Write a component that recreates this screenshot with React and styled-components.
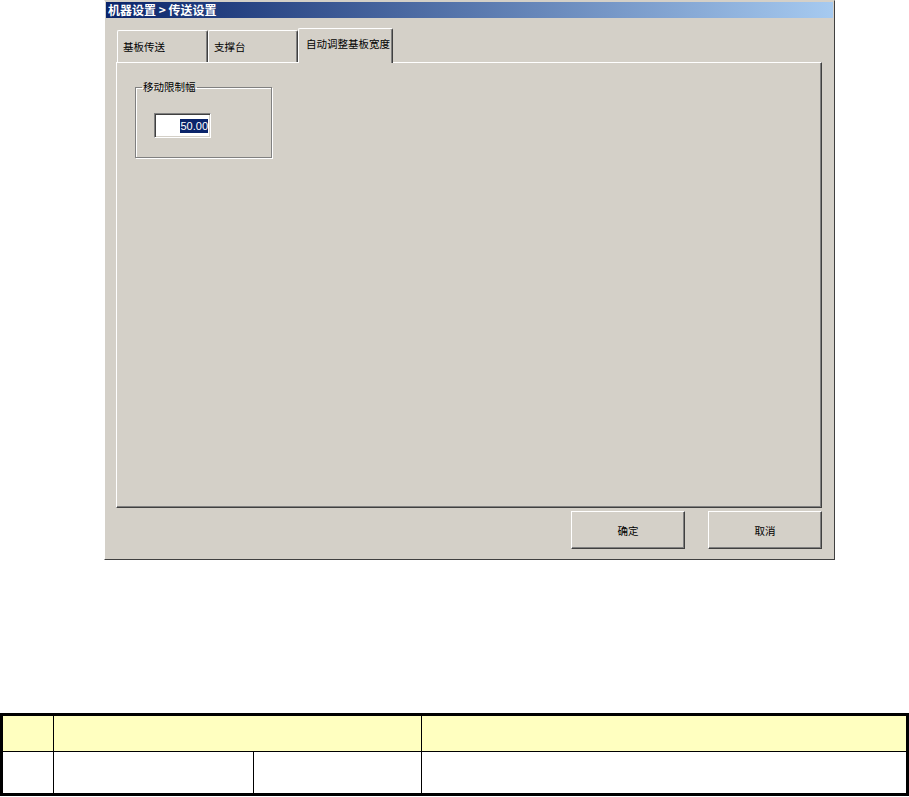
import React from 'react';
import styled, { createGlobalStyle } from 'styled-components';

const GlobalStyle = createGlobalStyle`
    html, body {
        margin: 0;
        padding: 0;
        background: #fff;
    }
    body {
        font-family: "Noto Sans CJK SC", "Liberation Sans", sans-serif;
        font-size: 10.5px;
        color: #000;
    }
`;

const tabs = ["基板传送", "支撑台", "自动调整基板宽度"];
const tabWidths = [91, 90, 95];

const App = () => {
    const active = 2

    return (
        <Page>
            <GlobalStyle />
            <Window>
                <TitleBar>机器设置 &gt; 传送设置</TitleBar>
                <Body>
                    <TabStrip>
                        {tabs.map((label, i) => (
                            <Tab key={label} active={i === active} w={tabWidths[i]}>
                                {label}
                            </Tab>
                        ))}
                    </TabStrip>
                    <Panel>
                        <GroupBox>
                            <Legend>移动限制幅</Legend>
                            <EditBox>
                                <Selected>50.00</Selected>
                            </EditBox>
                        </GroupBox>
                    </Panel>
                    <ButtonRow>
                        <Button>确定</Button>
                        <Button>取消</Button>
                    </ButtonRow>
                </Body>
            </Window>

            <Table>
                <colgroup>
                    <col style={{ width: 52 }} />
                    <col style={{ width: 200 }} />
                    <col style={{ width: 168 }} />
                    <col />
                </colgroup>
                <tbody>
                    <HeadRow>
                        <Cell></Cell>
                        <Cell colSpan={2}></Cell>
                        <Cell></Cell>
                    </HeadRow>
                    <DataRow>
                        <Cell></Cell>
                        <Cell></Cell>
                        <Cell></Cell>
                        <Cell></Cell>
                    </DataRow>
                </tbody>
            </Table>
        </Page>
    );
}

export default App;

const Page = styled.div`
    display: flex;
    flex-direction: column;
    width: 909px;
`;

const Window = styled.div`
    margin-left: 104px;
    width: 731px;
    height: 560px;
    box-sizing: border-box;
    background: #d4d0c8;
    border: 1px solid;
    border-color: #d4d0c8 #404040 #404040 #fff;
    padding: 1px;
    display: flex;
    flex-direction: column;
`;

const TitleBar = styled.div`
    height: 16px;
    line-height: 16px;
    padding-left: 2px;
    background: linear-gradient(to right, #0a246a, #a6caf0);
    color: #fff;
    font-weight: bold;
    font-size: 12px;
    white-space: nowrap;
`;

const Body = styled.div`
    flex: 1;
    display: flex;
    flex-direction: column;
    padding: 10px 11px 0 10px;
`;

const TabStrip = styled.div`
    display: flex;
    align-items: flex-end;
    padding-left: 1px;
    height: 34px;
    position: relative;
    z-index: 1;
`;

const Tab = styled.div`
    width: ${({ w }) => w}px;
    box-sizing: border-box;
    height: ${({ active }) => active ? "35px" : "32px"};
    margin-bottom: ${({ active }) => active ? "-1px" : "0"};
    padding: ${({ active }) => active ? "8px 0 0 7px" : "9px 0 0 5px"};
    background: #d4d0c8;
    border-top: 1px solid #fff;
    border-left: 1px solid #fff;
    border-right: 1px solid #404040;
    box-shadow: inset -1px 0 0 #808080;
    border-radius: 2px 2px 0 0;
    line-height: 14px;
    white-space: nowrap;
`;

const Panel = styled.div`
    height: 446px;
    box-sizing: border-box;
    border: 1px solid;
    border-color: #fff #404040 #404040 #fff;
    box-shadow: inset -1px -1px 0 #808080;
    padding: 17px 0 0 18px;
`;

const GroupBox = styled.fieldset`
    margin: 0;
    width: 137px;
    height: 78px;
    box-sizing: border-box;
    padding: 19px 0 0 18px;
    border: 1px solid #808080;
    box-shadow: inset 1px 1px 0 #fff, 1px 1px 0 #fff;
`;

const Legend = styled.legend`
    margin-left: -12px;
    padding: 0 1px;
    line-height: 14px;
`;

const EditBox = styled.div`
    width: 57px;
    height: 25px;
    box-sizing: border-box;
    background: #fff;
    border: 1px solid;
    border-color: #808080 #fff #fff #808080;
    box-shadow: inset 1px 1px 0 #404040, inset -1px -1px 0 #d4d0c8;
    display: flex;
    align-items: center;
    justify-content: flex-end;
    padding-right: 2px;
`;

const Selected = styled.span`
    background: #0a246a;
    color: #fff;
    font-family: "Liberation Sans", Arial, sans-serif;
    font-size: 11px;
    line-height: 14px;
`;

const ButtonRow = styled.div`
    display: flex;
    justify-content: flex-end;
    gap: 23px;
    margin-top: 3px;
`;

const Button = styled.div`
    width: 114px;
    height: 38px;
    box-sizing: border-box;
    display: flex;
    align-items: center;
    justify-content: center;
    background: #d4d0c8;
    border: 1px solid;
    border-color: #fff #404040 #404040 #fff;
    box-shadow: inset -1px -1px 0 #808080;
`;

const Table = styled.table`
    margin-top: 153px;
    width: 909px;
    border-collapse: collapse;
    border: 3px solid #000;
    table-layout: fixed;
`;

const HeadRow = styled.tr`
    height: 37px;
    background: #ffffc0;
`;

const DataRow = styled.tr`
    height: 43px;
    background: #fff;
`;

const Cell = styled.td`
    border: 1px solid #000;
    padding: 0;
`;
